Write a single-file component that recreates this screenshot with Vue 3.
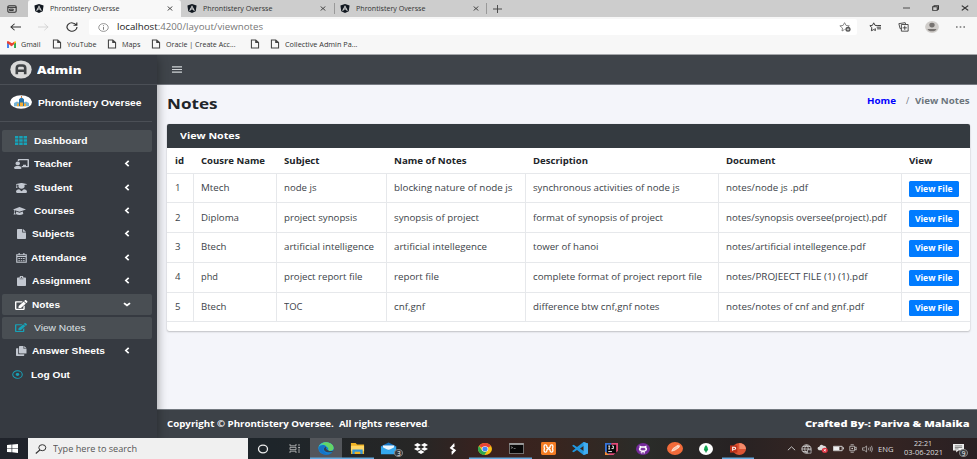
<script setup>
import { h } from 'vue'

// Stretches a label horizontally so that it fills the given width.
const vFit = {
  mounted(el, { value }) {
    if (!value) return
    const natural = el.getBoundingClientRect().width
    el.style.transform = `scaleX(${value / natural})`
    el.style.marginRight = `${value - natural}px`
  }
}

const doc = '<path d="M2 1.5h6l4 4v9H2zM8 1.5v4h4" fill="none" stroke="#444" stroke-width="1.5"/>'
const edit = '<path fill="currentColor" d="M402.6 83.2l90.2 90.2c3.8 3.8 3.8 10 0 13.8L274.4 405.6l-92.8 10.3c-12.4 1.4-22.9-9.1-21.5-21.5l10.3-92.8L388.8 83.2c3.8-3.8 10-3.8 13.8 0zm162-22.9l-48.8-48.8c-15.2-15.2-39.9-15.2-55.2 0l-35.4 35.4c-3.8 3.8-3.8 10 0 13.8l90.2 90.2c3.8 3.8 10 3.8 13.8 0l35.4-35.4c15.2-15.3 15.2-40 0-55.2zM384 346.2V448H64V128h229.8c3.2 0 6.2-1.3 8.5-3.5l40-40c7.6-7.6 2.2-20.5-8.5-20.5H48C21.5 64 0 85.5 0 112v352c0 26.5 21.5 48 48 48h352c26.5 0 48-21.5 48-48V306.2c0-10.7-12.9-16-20.5-8.5l-40 40c-2.2 2.3-3.5 5.3-3.5 8.5z"/>'

const icons = {
  tabs: ['0 0 12 10', '<rect x="1" y="1" width="10" height="8" rx="1.5" fill="none" stroke="#333" stroke-width="1.3"/><path d="M1 3h10M3 5.2h4.5v1.6H3z" stroke="#333" stroke-width="1.2" fill="none"/>'],
  angular: ['0 0 24 24', '<path d="M12 0l11 4-2 15-9 5-9-5L1 4z" fill="#111820"/><path d="M12 3L5 18h3l1.400-3.500h5.200L16 18h3zm0 5l1.700 4h-3.400z" fill="#ddd"/>'],
  close: ['0 0 10 10', '<path d="M1 1l8 8M9 1l-8 8" stroke="#333" stroke-width="1.500"/>'],
  plus: ['0 0 10 10', '<path d="M5 0v10M0 5h10" stroke="#444" stroke-width="1.100"/>'],
  min: ['0 0 8 8', '<path d="M0 4h8" stroke="#444" stroke-width="1"/>'],
  max: ['0 0 10 10', '<path d="M1 3h6.500v6H1zM3 3V1h6.300v6H7.500" fill="none" stroke="#333" stroke-width="1.500"/>'],
  back: ['0 0 12 10', '<path d="M12 5H1M5 1L1 5l4 4" fill="none" stroke="#333" stroke-width="1.100"/>'],
  fwd: ['0 0 12 10', '<path d="M0 5h11M7 1l4 4-4 4" fill="none" stroke="#d0d0d0" stroke-width="1"/>'],
  reload: ['0 0 12 12', '<path d="M10.300 3.500A5 5 0 1 0 11 6M10.800.5v3.300H7.500" fill="none" stroke="#333" stroke-width="1.200"/>'],
  info: ['0 0 12 12', '<circle cx="6" cy="6" r="5.200" fill="none" stroke="#777" stroke-width=".9"/><path d="M6 5.200V9M6 3v1.100" stroke="#666"/>'],
  staradd: ['0 0 14 12', '<path d="M6.500 9L3.500 10.800l.6-3.600L1 4.600l3.800-.5L6.500.8l1.700 3.300 3.800.5-1.500 1.500" fill="none" stroke="#777"/><circle cx="10.500" cy="8.800" r="3" fill="#555"/><path d="M9 8.800h3M10.500 7.300v3" stroke="#eee" stroke-width=".8"/>'],
  favs: ['0 0 14 12', '<path d="M9.500 4.200L7 4 5.500 1 4 4 1 4.400l2.300 2.300-.5 3.800 2.700-1.400 2 1.100-.3-2.700M9.500 4.200H14M9 6.200H14M9.500 8.200H14" fill="none" stroke="#333" stroke-width="1.100"/>'],
  collections: ['0 0 13 12', '<path d="M4 8H2.500L1 2 8.500.8l.6 1.800M4 3h8v8H4zM8 4.500v5M5.500 7h5" fill="none" stroke="#333" stroke-width="1"/>'],
  user: ['0 0 14 14', '<circle cx="7" cy="7" r="6.900" fill="#d0cdca"/><circle cx="7" cy="4.800" r="2.700" fill="#777371"/><path d="M2.500 9.200h9a4.600 3.500 0 0 1-9 0z" fill="#777371"/>'],
  dots: ['0 0 9 3', '<path d="M0 .8h1.600v1.500H0zM3.700.8h1.600v1.500H3.700zM7.400.8H9v1.500H7.400z" fill="#333"/>'],
  gmail: ['0 0 12 9', '<path d="M0 1v8h2.600V4L6 6.600 9.400 4 6 2.500 2 .2Q.2-.3 0 1" fill="#e94335"/><path d="M0 3v6h2.600V4.500z" fill="#4285f4"/><path d="M9.400 3v6H12V2z" fill="#34a853"/><path d="M9.400 1Q12-.8 12 2L9.400 4z" fill="#fbbc04"/><path d="M2.600 1L6 3.500 9.400 1v3L6 6.600 2.600 4z" fill="#e94335"/>'],
  doc: ['0 0 14 16', doc],
  bars: ['0 0 10 8', '<path d="M0 1h10M0 4h10M0 7h10" stroke="#d0d3d6" stroke-width="1.300"/>'],
  admin: ['0 0 22 20', '<ellipse cx="11" cy="10" rx="10.700" ry="9.600" fill="#d9d9d9"/><path d="M6.800 15V8.500Q6.800 5.800 9.500 5.800h3Q15.200 5.800 15.200 8.500V15M7 11.300h8" fill="none" stroke="#3f4245" stroke-width="2.600"/>'],
  school: ['0 0 22 15', '<ellipse cx="11" cy="7.500" rx="11" ry="7.300" fill="#fff"/><path d="M9 4.500l2.500-2 2.500 2V12H9z" fill="#2574ad"/><path d="M4 8.500l3-1.500 2 1v4H4zM14 8l2-1 3 1.500V12h-5z" fill="#74b3d7"/><path d="M10 8h3v4h-3zM7 9h2v3H7zM14 9h2v3h-2z" fill="#f5ac35"/><path d="M11.500 1v2" stroke="#d87935"/>'],
  th: ['0 0 12 10', '<path d="M0 0h3.300v2.700H0zM4.200 0h3.500v2.700H4.200zM8.600 0H12v2.700H8.600zM0 3.500h3.300v2.800H0zM4.200 3.500h3.500v2.800H4.200zM8.600 3.500H12v2.800H8.600zM0 7.200h3.300V10H0zM4.200 7.200h3.500V10H4.200zM8.600 7.200H12V10H8.600z" fill="currentColor"/>'],
  teacher: ['0 0 640 512', '<path fill="currentColor" d="M208 352c-2.390 0-4.780.35-7.060 1.090C187.980 357.300 174.350 360 160 360c-14.370 0-27.980-2.700-40.950-6.910C116.770 352.350 114.380 352 112 352 50.140 352 0 401.200 0 464c0 26.500 21.500 48 48 48h224c26.500 0 48-21.500 48-48 0-61.900-50.200-112-112-112zm-48-32c53.020 0 96-42.980 96-96s-42.980-96-96-96-96 42.980-96 96 42.980 96 96 96zM592 0H208c-26.470 0-48 22.250-48 49.590V96c23.420 0 45.100 6.780 64 17.800V64h352v288h-64v-64H384v64h-76.240c19.100 16.690 33.120 38.730 39.690 64H592c26.470 0 48-22.250 48-49.590V49.590C640 22.250 618.470 0 592 0z"/>'],
  student: ['0 0 448 512', '<path fill="currentColor" d="M319.400 320.600L224 416l-95.400-95.400C57.100 323.700 0 382.200 0 454.400v9.600c0 26.500 21.500 48 48 48h352c26.500 0 48-21.500 48-48v-9.600c0-72.200-57.100-130.700-128.600-133.800zM13.600 79.800l6.400 1.500v58.400c-7 4.200-12 11.500-12 20.300 0 8.400 4.600 15.400 11.100 19.700L3.500 242c-1.700 6.900 2.100 14 7.600 14h41.800c5.500 0 9.300-7.100 7.600-14l-15.600-62.300C51.400 175.400 56 168.400 56 160c0-8.800-5-16.100-12-20.300V87.100l66 15.900c-8.600 17.200-14 36.400-14 57 0 70.700 57.300 128 128 128s128-57.300 128-128c0-20.600-5.300-39.800-14-57l96.300-23.200c18.200-4.400 18.200-27.100 0-31.500l-190.400-46c-13-3.100-26.700-3.100-39.700 0L13.600 48.200c-18.100 4.400-18.100 27.200 0 31.600z"/>'],
  cap: ['0 0 14 10', '<path d="M7 0l7 3-7 3-5-2v3.500L3 9.500H.5l.8-2.200V3.600L0 3z" fill="currentColor"/><path d="M3.500 5.700L7 7.100l3.500-1.400.6 3Q7 11 2.900 8.700z" fill="currentColor"/>'],
  file: ['0 0 12 14', '<path d="M1 0h6v5h5v8q0 1-1 1H1q-1 0-1-1V1q0-1 1-1zM8 0l4 4H8z" fill="currentColor"/>'],
  calendar: ['0 0 14 14', '<path d="M1 2.500h12V13H1zM1 5h12M4 0v3M10 0v3" fill="none" stroke="currentColor" stroke-width="1.500"/><path d="M3 7h2v1.500H3zM6 7h2v1.500H6zM9 7h2v1.500H9zM3 10h2v1.500H3zM6 10h2v1.500H6zM9 10h2v1.500H9z" fill="currentColor"/>'],
  clip: ['0 0 12 14', '<path d="M1 2h2.500a2.500 2.500 0 0 1 5 0H11q1 0 1 1v10q0 1-1 1H1q-1 0-1-1V3q0-1 1-1z" fill="currentColor"/><path d="M3.500 4h5" stroke="#62666c"/><circle cx="6" cy="2" r=".8" fill="#555"/>'],
  edit: ['0 0 576 512', edit],
  copy: ['0 0 14 14', '<path d="M5 0h5v4h4v6.500H5q-1 0-1-1V1q0-1 1-1zM11 0l3 3h-3zM0 4q0-1 1-1h2v8.500h8V13q0 1-1 1H1q-1 0-1-1z" fill="currentColor"/>'],
  dotcircle: ['0 0 12 10', '<ellipse cx="6" cy="5" rx="5.200" ry="4.300" fill="none" stroke="currentColor" stroke-width="1.100"/><ellipse cx="6" cy="5" rx="1.900" ry="1.600" fill="currentColor"/>'],
  left: ['0 0 6 8', '<path d="M4.700 1L1.800 4l2.900 3" fill="none" stroke="#fff" stroke-width="1.700"/>'],
  down: ['0 0 8 6', '<path d="M1 1.400l3 2.700 3-2.700" fill="none" stroke="#fff" stroke-width="1.800"/>'],
  windows: ['0 0 12 10', '<path d="M0 1.200l5-.6v4H0zM5.700.5L12 0v4.600H5.700zM0 5.300h5v4l-5-.5zM5.700 5.300H12V10l-6.300-.7z" fill="#fff"/>'],
  search: ['0 0 12 10', '<ellipse cx="7.300" cy="3.700" rx="3.500" ry="3" fill="none" stroke="#333" stroke-width="1"/><path d="M4.800 6L.8 9.500" stroke="#333" stroke-width="1.100"/>'],
  cortana: ['0 0 12 10', '<ellipse cx="6" cy="5" rx="4.500" ry="3.900" fill="none" stroke="#eee" stroke-width="1.300"/>'],
  taskview: ['0 0 12 10', '<path d="M1 0v2h6V0M1 10V8h6v2M1 3.700h6v2.600H1zM10 0v2.500M10 5.500V10" fill="none" stroke="#ccc" stroke-width=".8"/><path d="M9.400 3.300h1.300v1.400H9.400z" fill="#eee"/>'],
  edge: ['0 0 24 24', '<circle cx="12" cy="12" r="11.500" fill="#1585d5"/><path d="M1 10C2 2 9-.5 15 1c7 2 9 8 8 12-1 3-5 4-8 2 2-2 1-6-3-6C8 9 7 13 8 17 4 16 1 14 1 10z" fill="#35c7c1"/><path d="M15 1c7 2 9 8 8 12-1 3-5 4-8 2 1-2 1-4-1-6-3-4-7-5-9-5C8 1 12 0 15 1z" fill="#65d565"/><path d="M1 10c2-5 9-6 12-1-4 0-6 4-4 8 2 5 8 6 12 3-3 5-13 5-17-1-2-3-3-6-3-9z" fill="#1474c8"/><path d="M15 15c-3-1-4-5-2-6-4 0-5 4-3 7s8 4 12 2l1-2c-3 1-6 1-8-1z" fill="#364251"/>'],
  explorer: ['0 0 16 12', '<path d="M1 0h5l1.500 1.500H15V12H1z" fill="#efb324"/><path d="M1 3h14v6H1z" fill="#ffd766"/><path d="M2.500 12V7h11v5h-2.500V9.500H5V12z" fill="#3496d8"/>'],
  mail: ['0 0 20 15', '<path d="M1 5l8-4.500L17 5v8H1z" fill="#1474c4"/><path d="M3 4h12v5H3z" fill="#e9f5fd"/><path d="M1 5l8 4.500L17 5v9H1z" fill="#34a8ee"/>'],
  dropbox: ['0 0 16 14', '<path d="M4 0l4 2.500L4 5 0 2.500zM12 0l4 2.500L12 5 8 2.500zM4 5l4 2.500L4 10 0 7.500zM12 5l4 2.500-4 2.500-4-2.500zM8 8.800l4 2.500L8 14l-4-2.700z" fill="#fff"/>'],
  sway: ['0 0 10 14', '<path d="M6.500 0l.6 4L4.500 5.500 9 8.500 3.500 14 3.100 10 5 8.800.8 5.700z" fill="#fff"/>'],
  chrome: ['0 0 24 24', '<circle cx="12" cy="12" r="12" fill="#fbc116"/><path d="M12 12L1.600 6A12 12 0 0 1 22.400 6z" fill="#e84335"/><path d="M1.600 6A12 12 0 0 0 11 24l5-9-4 2-5-2z" fill="#2da94f"/><circle cx="12" cy="12" r="5.600" fill="#fff"/><circle cx="12" cy="12" r="4.500" fill="#4285f4"/>'],
  terminal: ['0 0 16 12', '<rect x=".5" y=".5" width="15" height="11" fill="#080808" stroke="#777"/><path d="M.5 1.200h15" stroke="#bbb" stroke-width="1.500"/><path d="M2 4l2 1-2 1M5 6h2" stroke="#aaa" fill="none" stroke-width=".7"/>'],
  xampp: ['0 0 16 14', '<rect width="16" height="14" rx="1.500" fill="#f47b22"/><path d="M4.300 3.200Q2.600 3.600 3.700 7q-1.100 3.400.6 3.800 2.200.2 2-2.300L8 7l1.700 1.500q-.2 2.500 2 2.300 1.700-.4.600-3.800 1.100-3.400-.6-3.800-2.200-.2-2 2.300L8 7 6.300 5.500q.2-2.500-2-2.300z" fill="none" stroke="#fff" stroke-width="1.400"/>'],
  vscode: ['0 0 16 14', '<path d="M11.500 0L16 1.700v10.600L11.500 14 5 8.500 1.600 11 0 10l3.500-3L0 4l1.600-1L5 5.500zM12 4L8 7l4 3z" fill="#2197df"/><path d="M11.500 0L16 1.700v10.600L11.500 14z" fill="#42adf0"/>'],
  intellij: ['0 0 14 14', '<path d="M0 0h7v14H0z" fill="#3774db"/><path d="M7 0h7v9l-5 5H4z" fill="#e44b78"/><path d="M0 10l5 4H0z" fill="#f58c37"/><path d="M2 2h10v10H2z" fill="#080808"/><path d="M3.500 3.500h2M4.500 3.500v3.500M3.500 7h2M7.500 3.500H9v3H7M3.500 10h4" stroke="#fff" fill="none"/>'],
  github: ['0 0 24 24', '<circle cx="12" cy="12" r="12" fill="#742a9b"/><path d="M9 21v-4C4.500 16 4 11 6.200 9L6 5l3.500 1.500h5L18 5l-.2 4C20 11 19.500 16 15 17v4h-2v-3h-2v3z" fill="#fff"/><path d="M9 9.500h6q3 3 .5 5-3.500 1-7 0-2.500-2 .5-5zM9 19q-2 .500-3-1.500" fill="#742a9b" stroke="#fff" stroke-width=".6"/>'],
  postman: ['0 0 24 24', '<circle cx="12" cy="12" r="12" fill="#f26b3a"/><path d="M7 17l2-5 6-5 3 3-6 5zM15 7l2-1 2 1-1 3" fill="#f8c4aa" stroke="#fff" stroke-width=".9"/>'],
  mongo: ['0 0 24 24', '<circle cx="12" cy="12" r="12" fill="#fff"/><path d="M12 4q4 5 3.500 9Q15 16 12 18q-3-2-3.500-5Q8 9 12 4z" fill="#10a650"/><path d="M12 12v8" stroke="#17723c"/>'],
  ppt: ['0 0 24 20', '<ellipse cx="14" cy="10" rx="10" ry="10" fill="#dd5434"/><path d="M14 0a10 10 0 0 1 10 10H14z" fill="#f58b6b"/><path d="M0 4h11v12H0z" fill="#bd321b"/><path d="M4 13V7h2.500q2 0 2 1.800t-2 1.800H4" fill="none" stroke="#fff" stroke-width="1.600"/>'],
  up: ['0 0 10 6', '<path d="M1 5l4-4 4 4" fill="none" stroke="#ddd"/>'],
  globe: ['0 0 12 12', '<circle cx="6" cy="6" r="5" fill="none" stroke="#ddd"/><path d="M1 6h10M2 3h8M2 9h8M6 1Q2 6 6 11Q10 6 6 1" fill="none" stroke="#ddd" stroke-width=".8"/><path d="M7 7h4v4H7z" fill="#2e2527" stroke="#ddd" stroke-width=".7"/>'],
  cloud: ['0 0 12 10', '<path d="M2 7Q-1 4 2.500 3 4-.5 7 2q3-.6 3.500 3l-3 2z" fill="#ddd"/><ellipse cx="8.500" cy="7" rx="3.200" ry="2.900" fill="#dc3542"/><path d="M7.300 5.900l2.400 2.200m0-2.200L7.300 8.100" stroke="#fff" stroke-width=".9"/>'],
  battery: ['0 0 12 8', '<path d="M.5 1.500h9.500v5H.5zM10.500 3h1v2" fill="none" stroke="#ddd"/><path d="M1 2h6v4H1z" fill="#eee"/>'],
  meet: ['0 0 10 12', '<path d="M1 3h6v6H1zM7 5l2-1v4L7 7M2 1h4M2 11h4" fill="none" stroke="#ccc"/><circle cx="4" cy="6" r="1" fill="#ddd"/>'],
  sound: ['0 0 12 10', '<path d="M.6 3.500h2L5 1.200v7.600L2.600 6.500h-2zM7 3.500q1 1.500 0 3M8.700 2.300q2 2.700 0 5.400M10.300 1q2.300 4 0 8" fill="none" stroke="#ccc" stroke-width=".8"/>'],
  notice: ['0 0 12 11', '<path d="M0 0h12v8H6l-2.500 2.500V8H0z" fill="#eee"/><path d="M2 2.300h8M2 4.200h8M2 6h4" stroke="#555" stroke-width=".8"/>']
}

const Icon = ({ name, w, ht }) =>
  h('svg', { width: w, height: ht, viewBox: icons[name][0], preserveAspectRatio: 'none', innerHTML: icons[name][1], style: { display: 'block', flex: 'none' } })
Icon.props = ['name', 'w', 'ht']

const bookmarks = [
  { i: 'gmail', t: 'Gmail', w: 19.5, cell: 44.5 },
  { i: 'doc', t: 'YouTube', w: 29.5, cell: 55 },
  { i: 'doc', t: 'Maps', w: 18.5, cell: 44.5 },
  { i: 'doc', t: 'Oracle | Create Acc...', w: 69.5, cell: 99 },
  { i: 'doc', t: '', w: 0, cell: 20 },
  { i: 'doc', t: 'Collective Admin Pa...', w: 72.5, cell: 100 }
]

const menu = [
  { t: 'Dashboard', i: 'th', x: 13, w: 53.5, iw: 12, ih: 9, pad: 7, kind: 'on teal', a: '' },
  { t: 'Teacher', i: 'teacher', x: 12, w: 38, iw: 15, ih: 10, pad: 5.4, a: 'left' },
  { t: 'Student', i: 'student', x: 14, w: 38.5, iw: 11, ih: 10, pad: 7, a: 'left' },
  { t: 'Courses', i: 'cap', x: 10.5, w: 40.5, iw: 13, ih: 8, pad: 8, a: 'left' },
  { t: 'Subjects', i: 'file', x: 14.5, w: 42.5, iw: 9, ih: 10, pad: 6, a: 'left' },
  { t: 'Attendance', i: 'calendar', x: 14, w: 55.5, iw: 11, ih: 10, pad: 4.4, a: 'left' },
  { t: 'Assignment', i: 'clip', x: 14.5, w: 58.5, iw: 9, ih: 10, pad: 6, a: 'left' },
  { t: 'Notes', i: 'edit', x: 13, w: 28, iw: 12.5, ih: 10, pad: 4, kind: 'on white', a: 'down' },
  { t: 'View Notes', i: 'edit', x: 13, w: 51.5, iw: 12, ih: 9, pad: 7, kind: 'on teal sub', a: '' },
  { t: 'Answer Sheets', i: 'copy', x: 14, w: 73, iw: 10.5, ih: 10, pad: 5, a: 'left' },
  { t: 'Log Out', i: 'dotcircle', x: 10, w: 39, iw: 11, ih: 9, pad: 8.4, kind: 'teal', a: '' }
]

const heads = [['id', 9], ['Cousre Name', 64], ['Subject', 35.5], ['Name of Notes', 72.5], ['Description', 55], ['Document', 49.5], ['View', 23.5]]
const rows = [
  [['1', 5.5], ['Mtech', 28.5], ['node js', 32.5], ['blocking nature of node js', 118.5], ['synchronous activities of node js', 146.5], ['notes/node js .pdf', 82]],
  [['2', 5.5], ['Diploma', 38], ['project synopsis', 73], ['synopsis of project', 85], ['format of synopsis of project', 130], ['notes/synopsis oversee(project).pdf', 160.5]],
  [['3', 5.5], ['Btech', 25.5], ['artificial intelligence', 90], ['artificial intellegence', 93], ['tower of hanoi', 65.5], ['notes/artificial intellegence.pdf', 139.5]],
  [['4', 5.5], ['phd', 17], ['project report file', 78.5], ['report file', 45], ['complete format of project report file', 169], ['notes/PROJEECT FILE (1) (1).pdf', 141.5]],
  [['5', 5.5], ['Btech', 25.5], ['TOC', 18.5], ['cnf,gnf', 31], ['difference btw cnf,gnf notes', 126.5], ['notes/notes of cnf and gnf.pdf', 138]]
]

const tasks = [
  ['cortana', 12, 10], ['taskview', 12, 9], ['edge', 16, 13, 'active'], ['explorer', 15, 11, 'open'],
  ['mail', 19, 13, 'badge'], ['dropbox', 14, 11], ['sway', 8, 12], ['chrome', 14, 12, 'open'],
  ['terminal', 15, 11, 'open'], ['xampp', 15, 13], ['vscode', 16, 13], ['intellij', 13, 12],
  ['github', 14, 12], ['postman', 16, 13], ['mongo', 14, 12], ['ppt', 16, 12, 'open']
]
</script>

<template>
  <div class="screen">
    <header class="browser">
      <div class="tabstrip">
        <div class="tabmenu"><Icon name="tabs" w="10" ht="8" /></div>
        <div class="tab current"><Icon name="angular" w="10" ht="9" /><span v-fit="69.5" class="t">Phrontistery Oversse</span><Icon name="close" w="6" ht="5" /></div>
        <div class="tab"><Icon name="angular" w="10" ht="9" /><span v-fit="69.5" class="t">Phrontistery Oversse</span><Icon name="close" w="6" ht="5" /></div>
        <div class="tab ruled"><Icon name="angular" w="10" ht="9" /><span v-fit="69.5" class="t">Phrontistery Oversse</span><Icon name="close" w="6" ht="5" /></div>
        <div class="newtab"><Icon name="plus" w="9" ht="8" /></div>
        <div class="winbtns"><Icon name="min" w="7" ht="8" /><Icon name="max" w="7" ht="6" /><Icon name="close" w="8" ht="6" /></div>
      </div>
      <div class="toolbar">
        <div class="nav"><Icon name="back" w="11" ht="8" /><Icon name="fwd" w="11" ht="8" /><Icon name="reload" w="12" ht="10" /></div>
        <div class="address"><Icon name="info" w="11" ht="9" /><span v-fit="146" class="t url"><b>localhost</b>:4200/layout/viewnotes</span><Icon class="end" name="staradd" w="12" ht="10" /></div>
        <div class="tools"><Icon name="favs" w="12" ht="10" /><Icon name="collections" w="11" ht="10" /><Icon name="user" w="14" ht="12" /><Icon name="dots" w="9" ht="2" /></div>
      </div>
      <div class="bookmarks">
        <div v-for="(b, n) in bookmarks" :key="n" class="bm" :style="{ width: b.cell + 'px' }">
          <Icon :name="b.i" :w="b.i === 'gmail' ? 9 : 10" :ht="b.i === 'gmail' ? 7 : 10" />
          <span v-if="b.t" v-fit="b.w" class="t">{{ b.t }}</span>
        </div>
      </div>
    </header>

    <div class="app">
      <aside class="sidebar">
        <div class="adminrow"><Icon name="admin" w="22" ht="19" /><span v-fit="44.5" class="t">Admin</span></div>
        <div class="brandrow"><Icon name="school" w="22" ht="14" /><span v-fit="103.5" class="t">Phrontistery Oversee</span></div>
        <nav class="menu">
          <div v-for="m in menu" :key="m.t" class="item" :class="m.kind" :style="{ paddingLeft: m.x + 'px' }">
            <Icon class="glyph" :name="m.i" :w="m.iw" :ht="m.ih" />
            <span v-fit="m.w" class="t" :style="{ marginLeft: m.pad + 'px' }">{{ m.t }}</span>
            <span v-if="m.a" class="arrow"><Icon :name="m.a" :w="m.a === 'left' ? 6 : 8" :ht="m.a === 'left' ? 7 : 5" /></span>
          </div>
        </nav>
      </aside>
      <div class="main">
        <div class="topnav"><Icon name="bars" w="10" ht="7" /></div>
        <main class="content">
          <div class="heading">
            <h1><span v-fit="50.5" class="t">Notes</span></h1>
            <div class="crumbs"><span v-fit="29" class="t home">Home</span><span class="slash">/</span><span v-fit="54.5" class="t">View Notes</span></div>
          </div>
          <section class="card">
            <div class="cardhead"><span v-fit="60" class="t">View Notes</span></div>
            <div class="row head"><div v-for="c in heads" :key="c[0]" class="cell"><span v-fit="c[1]" class="t">{{ c[0] }}</span></div></div>
            <div v-for="(r, n) in rows" :key="n" class="row">
              <div v-for="(c, k) in r" :key="k" class="cell"><span v-fit="c[1]" class="t">{{ c[0] }}</span></div>
              <div class="cell"><button type="button"><span v-fit="37.5" class="t">View File</span></button></div>
            </div>
          </section>
        </main>
        <footer class="foot">
          <div><span v-fit="260.5" class="t">Copyright © Phrontistery Oversee.&nbsp; All rights reserved</span><i>.</i></div>
          <span v-fit="164.5" class="t credit">Crafted By-: Pariva &amp; Malaika</span>
        </footer>
      </div>
    </div>

    <div class="taskbar">
      <div class="start"><Icon name="windows" w="11" ht="9" /></div>
      <div class="searchbox"><Icon name="search" w="12" ht="10" /><span v-fit="84" class="t">Type here to search</span></div>
      <div class="tasks">
        <div v-for="k in tasks" :key="k[0]" class="task" :class="k[3]"><Icon :name="k[0]" :w="k[1]" :ht="k[2]" /><span v-if="k[3] === 'badge'" class="count">3</span></div>
      </div>
      <div class="tray">
        <Icon name="up" w="9" ht="5" /><Icon name="globe" w="11" ht="10" /><Icon name="cloud" w="11" ht="9" /><Icon name="battery" w="11" ht="7" /><Icon name="meet" w="8" ht="9" /><Icon name="sound" w="11" ht="8" />
        <span v-fit="15.5" class="t">ENG</span>
      </div>
      <div class="clock"><span v-fit="18" class="t">22:21</span><span v-fit="39" class="t">03-06-2021</span></div>
      <div class="notice"><Icon name="notice" w="11" ht="9" /><span class="count">9</span></div>
    </div>
  </div>
</template>

<style>
body { margin: 0; overflow: hidden; }
</style>

<style scoped>
.screen { width: 977px; height: 459px; display: flex; flex-direction: column; overflow: hidden; font-family: "Open Sans", "Noto Sans", sans-serif; }
.t { display: inline-block; white-space: pre; transform-origin: 0 50%; flex: none; }
.browser { height: 55px; flex: none; box-sizing: border-box; background: #f7f7f7; border-bottom: 1px solid #a5a7aa; font-size: 7.4px; line-height: 10px; color: #333; }
.tabstrip { height: 17px; display: flex; background: #cdcdcd; }
.tabmenu { width: 27.5px; display: flex; align-items: center; padding-left: 7px; box-sizing: border-box; background: #c6c6c6; }
.tab { width: 153px; box-sizing: border-box; padding: 0 7.5px 1px 6.5px; display: flex; align-items: center; gap: 6px; }
.tab svg:last-child { margin-left: auto; }
.current { background: #f8f8f8; border-radius: 3px 3px 0 0; }
.ruled { border-left: 1px solid #999; border-right: 1px solid #999; height: 11px; margin-top: 3px; padding: 0 6.5px 1px 5.5px; }
.newtab { padding-left: 6.5px; display: flex; align-items: center; }
.winbtns { margin-left: auto; display: flex; align-items: center; gap: 22px; padding-right: 8px; height: 15px; }
.toolbar { height: 20px; display: flex; align-items: center; }
.nav { width: 89px; display: flex; align-items: center; gap: 17px; padding-left: 9.5px; box-sizing: border-box; }
.address { width: 768px; height: 16px; background: #fff; border-radius: 2px; display: flex; align-items: center; padding: 0 6px 0 9px; box-sizing: border-box; }
.address .url { margin-left: 8px; font-size: 8.8px; line-height: 12px; color: #777; }
.url b { font-weight: 400; color: #222; }
.address .end { margin-left: auto; }
.tools { flex: 1; display: flex; align-items: center; padding-left: 12px; gap: 16.5px; }
.bookmarks { height: 14px; display: flex; align-items: center; padding-left: 7px; }
.bm { display: flex; align-items: center; gap: 5px; }
.app { height: 383px; flex: none; display: flex; overflow: hidden; }
.sidebar { width: 157px; flex: none; background: #363a41; color: #fff; font-family: "Liberation Sans", sans-serif; font-weight: 700; box-shadow: 0 3px 10px rgba(0, 0, 0, .4); z-index: 1; position: relative; }
.adminrow { height: 30px; box-sizing: border-box; border-bottom: 1px solid #4b4f56; display: flex; align-items: center; padding-left: 10px; gap: 5px; font: 800 10.8px/14px "Open Sans", sans-serif; }
.brandrow { height: 37px; box-sizing: border-box; margin-right: 5px; border-bottom: 1px solid #4b4f56; display: flex; align-items: center; padding: 0 0 3px 10px; gap: 6px; font-size: 9.3px; line-height: 12px; }
.brandrow .t { padding-top: 3px; }
.menu { padding: 8px 5px 0 2px; display: flex; flex-direction: column; gap: 1.8px; }
.item { height: 21.6px; box-sizing: border-box; display: flex; align-items: center; font-size: 9.3px; line-height: 12px; border-radius: 2px; padding-right: 21px; }
.item .glyph { color: #c2c7d0; }
.on { background: #494e53; }
.item.teal .glyph { color: #17a2b8; }
.item.white .glyph { color: #fff; }
.sub { font-weight: 400; color: #dfe2e5; }
.arrow { margin-left: auto; width: 8px; display: flex; justify-content: center; padding-bottom: 1px; }
.main { flex: 1; display: flex; flex-direction: column; background: #f4f5fa; }
.topnav { height: 30px; box-sizing: border-box; background: #3f444a; border-bottom: 1px solid #777b82; display: flex; align-items: center; padding-left: 15px; }
.content { height: 324px; padding: 0 7px 0 10px; box-sizing: border-box; }
.heading { height: 38.5px; display: flex; justify-content: space-between; }
h1 { margin: 7px 0 0; font-size: 15px; line-height: 22px; font-weight: 700; color: #212529; }
.crumbs { display: flex; padding: 10px .6px 0 0; font-size: 8.7px; line-height: 12px; font-weight: 700; color: #6c757d; }
.home { color: #00f; }
.slash { font-weight: 400; margin: 0 6px 0 10px; width: 3px; }
.card { height: 207.5px; background: #fff; border-radius: 2px; box-shadow: 0 0 1px rgba(0, 0, 0, .2), 0 1px 2px rgba(0, 0, 0, .2); overflow: hidden; color: #3c4349; }
.cardhead { height: 24.5px; box-sizing: border-box; background: #343a40; color: #fff; padding: 6px 0 0 13px; font-size: 8.7px; line-height: 13px; font-weight: 700; }
.row { display: grid; grid-template-columns: 26.5px 83px 110px 139.5px 192.5px 183px 68.5px; height: 29.8px; font-size: 8.7px; line-height: 12px; box-sizing: border-box; border-bottom: 1px solid #e6e8eb; }
.row.head { height: 25.5px; font-weight: 700; color: #212529; }
.cell { padding: 8.3px 0 0 7.4px; box-sizing: border-box; border-right: 1px solid #e6e8eb; }
.head .cell { border-color: transparent; padding-top: 7px; }
.cell:first-child { padding-left: 8px; }
.cell:last-child { border-right: 0; }
.row:not(.head) .cell:last-child { padding-top: 7px; }
button { display: block; width: 50px; height: 16.5px; border: 0; border-radius: 1.5px; background: #007bff; color: #fff; padding: 0 0 0 6.3px; text-align: left; font: 700 8px/16px "Open Sans", sans-serif; }
.foot { flex: 1; box-sizing: border-box; border-top: 1px solid #737980; background: #3d4248; color: #fff; display: flex; justify-content: space-between; align-items: center; padding: 0 7.5px 0 10px; font-size: 8.7px; line-height: 12px; font-weight: 700; }
.foot i { font-style: normal; font-weight: 400; color: #869099; }
.credit { font-weight: 800; font-size: 8.6px; }
.taskbar { height: 21px; flex: none; display: flex; color: #ddd; background: linear-gradient(90deg, #20232b 0, #1e252a 28%, #272625 43%, #3a211e 50%, #38251f 57%, #2a2c29 66%, #272223 75%, #392622 86%, #292023 100%); }
.start { width: 28px; display: flex; align-items: center; justify-content: center; padding-right: 3px; box-sizing: border-box; }
.searchbox { width: 220px; background: #f0f0f0; color: #555; display: flex; align-items: center; gap: 6px; padding-left: 7px; box-sizing: border-box; font-size: 8.7px; line-height: 12px; }
.tasks { display: flex; width: 507px; margin-left: -1px; margin-right: 1px; }
.task { width: 31.75px; display: flex; align-items: center; justify-content: center; position: relative; box-sizing: border-box; }
.active { background: #53565b; }
.active, .open { box-shadow: inset 0 -1.5px #64a9df; }
.count { position: absolute; right: 2px; bottom: 2px; width: 9px; height: 8px; border-radius: 50%; background: #34383c; border: .5px solid #888; box-sizing: border-box; font-size: 6.5px; line-height: 7px; text-align: center; color: #fff; }
.tray { display: flex; align-items: center; gap: 5px; padding-left: 31.5px; width: 145px; box-sizing: border-box; font-size: 7.2px; }
.clock { width: 46px; display: flex; flex-direction: column; align-items: center; font-size: 7px; line-height: 9px; padding-top: 1px; box-sizing: border-box; }
.notice { flex: 1; position: relative; display: flex; align-items: center; padding: 0 0 1px 7px; }
.notice .count { right: 9px; }
</style>
